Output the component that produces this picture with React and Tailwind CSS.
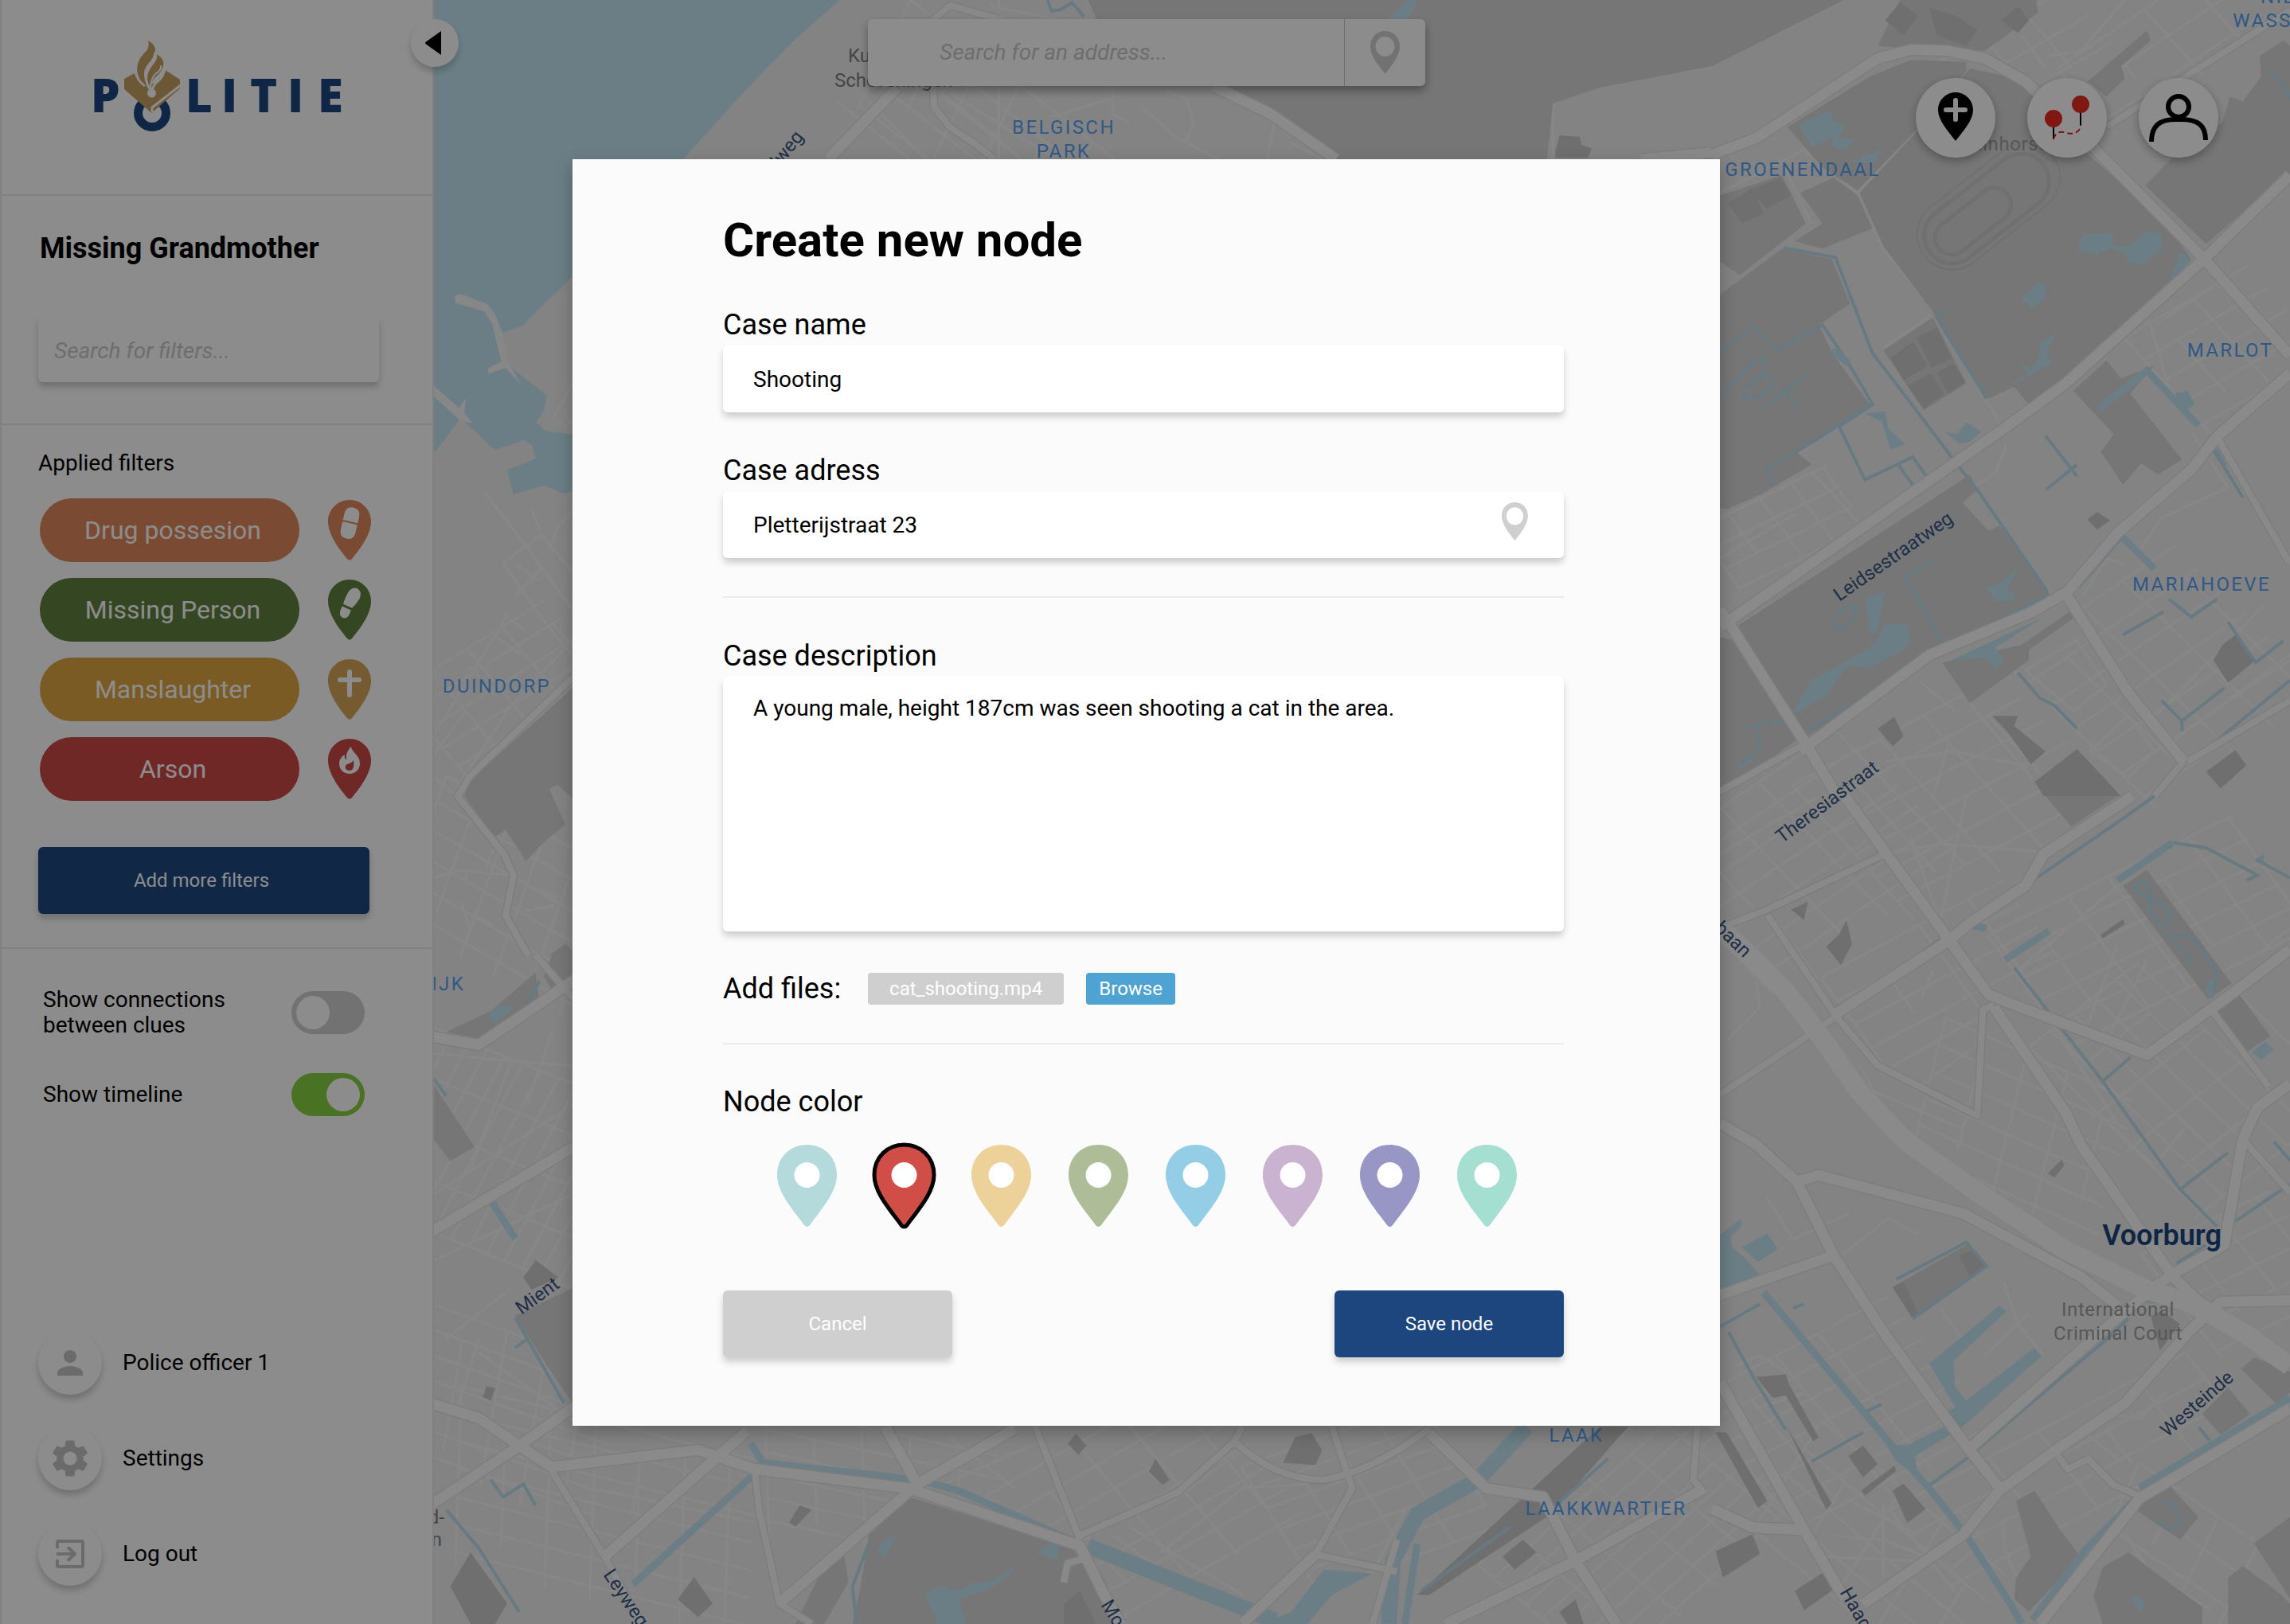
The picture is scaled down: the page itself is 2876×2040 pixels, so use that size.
import { useState } from 'react'
import { MdPerson, MdSettings } from 'react-icons/md'

const FILTERS = [
  { label: 'Drug possesion', pill: 'bg-[#da8659]', pin: '#da8659', icon: 'pill' },
  { label: 'Missing Person', pill: 'bg-[#5f7f3d]', pin: '#5f7f3d', icon: 'step' },
  { label: 'Manslaughter', pill: 'bg-[#daa340]', pin: '#d1a354', icon: 'cross' },
  { label: 'Arson', pill: 'bg-[#c84844]', pin: '#c84844', icon: 'fire' },
]

const NODE_COLORS = [
  { name: 'Aqua', fill: '#b5dadb' },
  { name: 'Red', fill: '#d04e45' },
  { name: 'Sand', fill: '#ecd299' },
  { name: 'Olive', fill: '#aebd98' },
  { name: 'Sky', fill: '#93cee6' },
  { name: 'Lilac', fill: '#c9b3d0' },
  { name: 'Violet', fill: '#9896c4' },
  { name: 'Mint', fill: '#a5dfd2' },
]

export default function App() {
  return (
    <div className="relative flex min-h-screen overflow-hidden bg-[#fafafa] font-['Roboto',sans-serif] text-black">
      <Sidebar />
      <main className="relative flex-1 overflow-hidden">
        <CityMap />
        <div className="relative flex items-start justify-between pr-[90px] pl-[545px]">
          <AddressSearch />
          <MapActions />
        </div>
      </main>
      <div className="absolute inset-0 z-20 bg-black/44 pt-[200px]">
        <NodeDialog />
      </div>
    </div>
  )
}

/* ---------- sidebar ---------- */

function Sidebar() {
  const [connections, setConnections] = useState(false)
  const [timeline, setTimeline] = useState(true)

  return (
    <aside className="relative z-10 flex w-[545px] shrink-0 flex-col border-x-2 border-[#e4e4e4] bg-[#fafafa]">
      <div className="h-[246px] border-b-2 border-[#e4e4e4] pt-12 pl-[108px]">
        <Logo />
      </div>

      <div className="border-b-2 border-[#e4e4e4] px-[46px] pt-[46px] pb-[52px]">
        <h1 className="pl-[2px] text-[36px] leading-10 font-bold">Missing Grandmother</h1>
        <input
          type="search"
          aria-label="Search for filters"
          placeholder="Search for filters..."
          className="mt-16 block h-[84px] w-[428px] rounded-md bg-[#fafafa] px-5 pt-1 text-[28px] italic shadow-[0_6px_8px_rgba(0,0,0,0.2)] placeholder:text-[#c4c4c4]"
        />
      </div>

      <div className="border-b-2 border-[#e4e4e4] px-[46px] pt-8 pb-[42px]">
        <h2 className="text-[28px] leading-8">Applied filters</h2>
        <ul className="mt-7 flex flex-col gap-5 pl-[2px]">
          {FILTERS.map(f => (
            <li key={f.label} className="flex items-center gap-9">
              <button className={`h-20 w-[326px] rounded-full pl-2 text-[32px] text-[#fafafa] ${f.pill}`}>{f.label}</button>
              <FilterPin color={f.pin} icon={f.icon} />
            </li>
          ))}
        </ul>
        <button className="mt-[58px] h-[84px] w-[416px] rounded-md bg-[#1d467e] pr-[6px] text-[24px] text-[#fafafa] shadow-[0_6px_8px_rgba(0,0,0,0.2)]">
          Add more filters
        </button>
      </div>

      <div className="flex flex-col gap-11 pt-12 pr-[85px] pl-[52px]">
        <Switch id="connections" checked={connections} onChange={setConnections}>
          Show connections<br />between clues
        </Switch>
        <Switch id="timeline" checked={timeline} onChange={setTimeline}>Show timeline</Switch>
      </div>

      <nav className="mt-auto flex flex-col gap-10 pb-12 pl-[46px]">
        <NavItem label="Police officer 1"><MdPerson className="size-12" /></NavItem>
        <NavItem label="Settings"><MdSettings className="size-14" /></NavItem>
        <NavItem label="Log out">
          <svg viewBox="0 0 36 36" className="size-9" fill="none" stroke="currentColor" strokeWidth="4">
            <path d="M2 11V4Q2 2 4 2H32Q34 2 34 4V32Q34 34 32 34H4Q2 34 2 32V25" />
            <path d="M1 18H24M15 9.500L24 18L15 26.500" />
          </svg>
        </NavItem>
      </nav>

      <button
        aria-label="Collapse sidebar"
        className="absolute top-6 -right-[33px] flex size-[60px] items-center justify-center rounded-full bg-[#fafafa] pr-1 shadow-[0_6px_8px_rgba(0,0,0,0.2)]"
      >
        <svg viewBox="0 0 20 30" className="h-[30px] w-5">
          <path d="M20 0V30L1 16.500Q-1 15 1 13.500Z" />
        </svg>
      </button>
    </aside>
  )
}

function Logo() {
  return (
    <svg viewBox="110 48 340 120" className="h-[120px] w-[340px]" role="img" aria-label="Politie">
      <g fill="#1b457d" className="font-['Open_Sans',sans-serif] text-[58px] font-extrabold">
        <text x="114" y="141">P</text>
        <text x="233" y="141">L</text>
        <text x="278" y="141">I</text>
        <text x="314" y="141">T</text>
        <text x="361" y="141">I</text>
        <text x="399" y="141">E</text>
      </g>
      <circle cx="191" cy="142" r="17.500" fill="none" stroke="#1b457d" strokeWidth="11" />
      {/* law book */}
      <path fill="#c39d60" d="M156 99L169 92Q176 100 190 106Q204 100 207.500 88L226 100V111L190.500 142L156 112Z" />
      <path stroke="#fafafa" strokeWidth="3" fill="none" d="M191 141V135L227 107" />
      {/* flame */}
      <path stroke="#fafafa" strokeWidth="3" fill="none" d="M170 90Q172 101 182 108M207 84Q207 96 196 104Q192 108 191 114" />
      <path fill="#c39d60" d="M186 51Q196 56 195 65Q194 72 187 79Q180 87 181 95Q182 102 186 110Q173 100 172 88Q172 76 181 67Q189 60 186 51Z" />
      <path fill="#c39d60" d="M197 68Q207 74 205 83Q203 90 197 95Q190 101 189 110Q183 102 186 92Q188 86 193 80Q198 75 197 68Z" />
      <path stroke="#fafafa" strokeWidth="3" fill="none" d="M195 65Q195 72 188 81Q182 88 183 98Q184 105 188 112" />
      <path stroke="#fafafa" strokeWidth="2" fill="none" d="M202 82Q204 87 195 93Q189 99 189 112" />
      <circle cx="190.500" cy="117" r="5.500" fill="#fafafa" />
    </svg>
  )
}

function FilterPin({ color, icon }) {
  return (
    <svg viewBox="0 0 54 76" className="h-[76px] w-[54px]" aria-hidden="true">
      <path fill={color} d="M27 0C12 0 0 12 0 27C0 45 16 64 24 74Q27 77 30 74C38 64 54 45 54 27C54 12 42 0 27 0Z" />
      {icon === 'pill' && (
        <g transform="rotate(13 27 29)" fill="#fafafa">
          <path d="M18 27V19Q18 9 27.500 9T37 19V27Z" />
          <path d="M18 29H37V39Q37 49 27.500 49T18 39Z" />
        </g>
      )}
      {icon === 'step' && (
        <g transform="rotate(24 27 30)" fill="#fafafa">
          <path d="M20 34Q17 10 27 9Q36 9 36 20Q35 28 32 34Z" />
          <path d="M20 37H32Q34 50 26 50Q19 49 20 37Z" />
        </g>
      )}
      {icon === 'cross' && <path stroke="#fafafa" strokeWidth="6" strokeLinecap="round" d="M27 16V45M15 26H39" />}
      {icon === 'fire' && (
        <>
          <path fill="#fafafa" d="M29 10C30 18 40 20 40 31C40 39 34 44 27 44C20 44 14 39 14 31C14 26 17 22 21 20C20 24 22 26 23 26C22 19 25 14 29 10Z" />
          <path fill={color} d="M32 27C33 34 32 40 27 40C23 40 21 37 22 34C23 31 29 32 32 27Z" />
        </>
      )}
    </svg>
  )
}

function Switch({ id, checked, onChange, children }) {
  return (
    <div className="flex items-center justify-between">
      <label htmlFor={id} className="text-[28px] leading-8">{children}</label>
      <input
        id={id}
        type="checkbox"
        checked={checked}
        onChange={e => onChange(e.target.checked)}
        className="h-[54px] w-[92px] appearance-none rounded-full bg-[#cbcbcb] before:m-[6px] before:block before:size-[42px] before:rounded-full before:bg-[#fafafa] checked:bg-[#82cb3d] checked:before:ml-11"
      />
    </div>
  )
}

function NavItem({ label, children }) {
  return (
    <a href="#" className="flex items-center gap-[26px] text-[28px] leading-8">
      <span className="flex size-20 items-center justify-center rounded-full bg-[#fafafa] text-[#bfbfbf] shadow-[0_6px_8px_rgba(0,0,0,0.2)]">
        {children}
      </span>
      {label}
    </a>
  )
}

/* ---------- controls on top of the map ---------- */

function AddressSearch() {
  return (
    <div className="mt-6 flex h-[84px] w-[700px] rounded-md bg-[#fafafa] shadow-[0_6px_12px_rgba(0,0,0,0.35)]">
      <input
        type="search"
        aria-label="Search for an address"
        placeholder="Search for an address..."
        className="min-w-0 flex-1 pl-[90px] text-[28px] italic placeholder:text-[#c4c4c4]"
      />
      <button aria-label="Pick on map" className="flex w-[102px] items-center justify-center border-l border-[#c4c4c4] text-[#cbcbcb]">
        <OutlinePin className="h-[54px] w-[37px]" />
      </button>
    </div>
  )
}

function OutlinePin({ className }) {
  return (
    <svg viewBox="0 0 37 54" className={className} aria-hidden="true">
      <path fill="currentColor" fillRule="evenodd" d="M18.500 0C8 0 0 8 0 19C0 31 10 43 18.500 54C27 43 37 31 37 19C37 8 29 0 18.500 0ZM18.500 7A12 12.500 0 1 1 18.500 32A12 12.500 0 1 1 18.500 7Z" />
    </svg>
  )
}

function MapActions() {
  const round = 'flex size-[100px] items-center justify-center rounded-full bg-[#fafafa] shadow-[0_4px_12px_rgba(0,0,0,0.3)]'
  return (
    <div className="mt-[98px] flex gap-10">
      <button aria-label="Add node" className={round}>
        <svg viewBox="0 0 100 100" className="size-[100px]">
          <path d="M50 18C38 18 28 28 28 40C28 53 40 66 50 79C60 66 72 53 72 40C72 28 62 18 50 18Z" />
          <path stroke="#fafafa" strokeWidth="6" strokeLinecap="round" d="M50 28V52M38 40H62" />
        </svg>
      </button>
      <button aria-label="Show connections" className={round}>
        <svg viewBox="0 0 100 100" className="size-[100px]" fill="none">
          <path stroke="black" strokeWidth="2" d="M33 60V77M67 42V60" />
          <path stroke="#d5241c" strokeWidth="2" strokeDasharray="7 4" d="M33 77Q36 66 46 68Q54 71 60 69Q67 66 67 59" />
          <circle cx="33" cy="51" r="11" fill="#e8281f" />
          <circle cx="67" cy="33" r="11" fill="#e8281f" />
        </svg>
      </button>
      <button aria-label="Account" className={round}>
        <svg viewBox="0 0 100 100" className="size-[100px]" fill="none" stroke="black" strokeWidth="6">
          <circle cx="50" cy="36" r="13" />
          <path d="M16 80C16 60 26 51 50 52C75 51 84 60 84 78" />
        </svg>
      </button>
    </div>
  )
}

/* ---------- dialog ---------- */

const LABEL = 'block text-[36px] leading-10'
const FIELD = 'mt-[6px] block w-full rounded-md bg-white px-[38px] text-[28px] leading-8 shadow-[0_6px_8px_rgba(0,0,0,0.18)]'

function NodeDialog() {
  const [name, setName] = useState('Shooting')
  const [address, setAddress] = useState('Pletterijstraat 23')
  const [description, setDescription] = useState('A young male, height 187cm was seen shooting a cat in the area.')
  const [color, setColor] = useState('Red')

  return (
    <form
      role="dialog"
      aria-labelledby="dialog-title"
      onSubmit={e => e.preventDefault()}
      className="ml-[25%] w-[50.1%] bg-[#fbfbfb] pt-[72px] pr-[196px] pb-[86px] pl-[189px] shadow-[0_8px_20px_rgba(0,0,0,0.25)]"
    >
      <h2 id="dialog-title" className="text-[60px] leading-[60px] font-bold">Create new node</h2>

      <label htmlFor="case-name" className={`mt-14 ${LABEL}`}>Case name</label>
      <input id="case-name" value={name} onChange={e => setName(e.target.value)} className={`h-[84px] ${FIELD}`} />

      <label htmlFor="case-address" className={`mt-[53px] ${LABEL}`}>Case adress</label>
      <div className="relative">
        <input id="case-address" value={address} onChange={e => setAddress(e.target.value)} className={`h-[84px] ${FIELD}`} />
        <OutlinePin className="absolute top-[14px] right-11 h-12 w-[35px] text-[#cfcfcf]" />
      </div>

      <hr className="mt-12 border-t-2 border-[#ebebeb]" />

      <label htmlFor="case-description" className={`mt-[53px] ${LABEL}`}>Case description</label>
      <textarea
        id="case-description"
        value={description}
        onChange={e => setDescription(e.target.value)}
        className={`h-80 resize-none py-6 ${FIELD}`}
      />

      <div className="mt-[52px] flex items-center">
        <span className="text-[36px] leading-10">Add files:</span>
        <span className="ml-[34px] flex h-10 w-[246px] items-center justify-center rounded-sm bg-[#cfcfcf] text-[24px] text-white">
          cat_shooting.mp4
        </span>
        <button type="button" className="ml-7 h-10 w-28 rounded-sm bg-[#4ea3d5] text-[24px] text-white">Browse</button>
      </div>

      <hr className="mt-12 border-t-2 border-[#ebebeb]" />

      <fieldset>
        <legend className={`pt-[52px] ${LABEL}`}>Node color</legend>
        <div className="flex gap-[47px] pt-[34px] pl-[68px]">
          {NODE_COLORS.map(c => (
            <label key={c.name} className="cursor-pointer">
              <input
                type="radio"
                name="node-color"
                aria-label={c.name}
                checked={color === c.name}
                onChange={() => setColor(c.name)}
                className="peer sr-only"
              />
              <svg
                viewBox="0 0 75 103"
                className="h-[103px] w-[75px] overflow-visible stroke-transparent stroke-[5px] peer-checked:stroke-black"
              >
                <path fill={c.fill} d="M37.500 0C16 0 0 16 0 38C0 61 22 84 34 101Q37.500 105 41 101C53 84 75 61 75 38C75 16 59 0 37.500 0Z" />
                <circle cx="37.500" cy="38" r="16" fill="white" stroke="none" />
              </svg>
            </label>
          ))}
        </div>
      </fieldset>

      <div className="mt-20 flex justify-between">
        <button type="button" className="h-[84px] w-72 rounded-md bg-[#cfcfcf] text-[24px] text-white shadow-[0_6px_8px_rgba(0,0,0,0.18)]">
          Cancel
        </button>
        <button className="h-[84px] w-72 rounded-md bg-[#1d467e] text-[24px] text-white shadow-[0_6px_8px_rgba(0,0,0,0.18)]">
          Save node
        </button>
      </div>
    </form>
  )
}

/* ---------- map ---------- */

// street blocks: centre, size, angle, skew and spacing of the streets
const BLOCKS = [
  [640, 1130, 260, 190, 30, 10, 34, 48],
  [640, 870, 220, 150, -32, 8, 30, 52],
  [620, 1450, 240, 330, -62, 6, 24, 60],
  [640, 1780, 260, 200, 20, 10, 30, 54],
  [1240, 170, 330, 150, 38, 12, 36, 58],
  [760, 1900, 380, 220, 14, 12, 34, 58],
  [1110, 1880, 300, 160, 12, 14, 28, 62],
  [1440, 1890, 300, 220, -30, 10, 36, 66],
  [1720, 1880, 240, 180, -20, 12, 30, 60],
  [2060, 1930, 320, 220, -42, 8, 26, 58],
  [2230, 650, 180, 120, -26, 10, 30, 44],
  [2270, 1080, 300, 230, -34, 10, 34, 58],
  [2460, 1000, 300, 220, -28, 14, 38, 62],
  [2440, 1220, 260, 130, -28, 8, 36, 70],
  [2720, 850, 260, 260, -34, 12, 40, 60],
  [2700, 1170, 340, 170, -26, 10, 34, 56],
  [2720, 1370, 300, 180, 44, -8, 34, 60],
  [2540, 1420, 260, 180, 24, 10, 34, 56],
  [2800, 440, 180, 160, -30, 12, 36, 50],
  [2820, 1600, 180, 160, -26, 12, 38, 54],
  [2600, 1850, 420, 130, -28, 10, 40, 70],
  [2320, 1780, 280, 220, -28, 12, 34, 60],
  [2360, 1950, 300, 160, 40, 8, 40, 66],
  [2760, 1960, 240, 120, 34, 8, 44, 60],
  [2520, 80, 240, 90, -30, 10, 44, 60],
  [2720, 60, 240, 110, -34, 8, 44, 66],
]

function blockPath(w, h, gapX, gapY) {
  let d = ''
  for (let y = -h / 2; y <= h / 2; y += gapX) d += `M${-w / 2} ${y}H${w / 2}`
  for (let x = -w / 2, i = 0; x <= w / 2; x += gapY, i++) {
    d += i % 3 === 1 ? `M${x} ${-h / 2 + gapX}V${h / 2 - gapX}` : `M${x} ${-h / 2}V${h / 2}`
  }
  return d
}

// every sheet is drawn in its own units and placed on the map by its transform
const SHEETS = [
  {
    id: 'north',
    transform: 'translate(1040 0) scale(0.5102 0.3333)',
    parks: 'M640 0L660 70L950 320L1250 600H1770L1784 390L1900 330L2176 250L2500 0Z',
    dark: 'M1790 575L1800 510L1850 515L1855 545L1880 560L1870 595H1790Z',
    water: 'M1380 72L1425 0H1450L1430 72Z',
    canals: 'M540 0L550 40L570 38L600 10L630 62',
    wide: '',
    streets: 'M20 380L200 600M100 380L240 600M400 10L430 75M420 0L420 30L560 72M270 340L420 520M300 350L560 600M420 330V600M550 440L720 360M700 330V430L740 460M770 400L860 520L960 600M880 370L830 340M880 370L900 460L880 540M1105 420L1080 600M1140 540L1220 600M1784 600V400L1830 340L2176 250',
    medium: 'M260 340V400L300 480L360 540L410 600M240 100L300 20L420 72',
    roads: 'M0 600L170 330M950 325L1090 430L1250 600M2000 600L2176 575',
  },
  {
    id: 'north-east',
    transform: 'translate(2150 0) scale(0.463 0.6378)',
    parks: 'M0 0H165L0 125ZM400 380L560 255L700 135L800 150L900 200L1000 290L1230 440L1300 510L1180 610L960 750L860 797L820 762L750 785L595 610L465 485ZM205 250L430 150L540 118L690 122L690 140L550 260L395 375L300 330ZM22 385L190 345L255 440L75 542L22 515ZM240 380L330 350L395 385L435 450L300 490L225 475L300 440ZM22 580L190 490L325 510L375 598L290 640L330 700L430 798L230 890L270 915L130 975L40 1003L22 1000ZM65 1235L700 935L720 965L680 990L750 1045L780 1035L915 1170L620 1285L260 1450ZM22 1255L55 1260L235 1455L22 1565ZM980 770L1070 710L1110 745L1200 720L1135 775L1275 905L1210 935L1165 912L1115 955L1055 890L1090 855ZM450 90L510 0H880L885 25L740 100L520 95ZM1175 365L1250 310L1300 290L1385 240L1405 190L1440 200L1490 150L1485 110L1550 80L1568 90V340L1340 480ZM1020 160L1180 60L1190 80L1110 130L1120 155L1070 190ZM625 1305L840 1270L970 1205L985 1215L860 1280V1300L700 1385ZM465 690L600 625L690 755L575 808Z',
    dark: 'M485 705L545 672L585 720L520 750ZM555 665L610 645L650 705L595 725ZM530 760L595 735L630 775L575 805ZM610 735L655 715L688 752L640 775ZM45 400L110 370L140 420L80 440ZM100 375L185 350L215 385L150 410ZM470 40L510 5L560 30L520 70ZM590 15L660 30L720 60L690 90L610 70ZM785 40L830 12L860 40L830 65ZM1360 1300L1385 1270L1420 1250L1475 1300L1400 1345ZM450 1435L495 1412L520 1450L490 1470ZM760 1410L830 1410L820 1430L905 1480L865 1505L800 1440ZM875 1540L990 1475L1110 1568H900ZM1340 1520L1420 1477L1450 1507L1380 1553ZM1018 1023L1045 1008L1080 1025L1045 1043Z',
    water: 'M235 245L320 218L330 240L360 245L345 270L385 275L360 295L325 290L330 270L270 290ZM370 320L460 295L440 320ZM990 490L1010 460L1085 460V485L1130 485L1180 455L1220 460V490L1170 522L1130 515L1120 495L1080 490L1040 502ZM840 590L880 560L905 558V585L870 608ZM1300 512L1270 495L1240 560ZM220 1400L270 1340L370 1300L440 1270L470 1230L530 1230L540 1265L500 1290L420 1315L370 1310L310 1370L230 1403ZM415 1180L470 1165L450 1240L430 1250ZM745 785L860 735L825 708L865 728L885 710L890 675L935 657L905 695L925 715L860 740ZM630 850L665 855L690 832L730 850L700 870L670 873ZM745 1155L780 1150L830 1120L800 1160L830 1180L770 1185ZM650 1300L900 1215L770 1275L790 1300L770 1315L740 1295ZM1255 775L1290 770L1310 795L1285 810ZM70 1500L120 1495L80 1512ZM415 815L470 810L480 845L525 875L485 885L460 830ZM1350 880L1375 885L1400 920L1370 905Z',
    canals: 'M195 488L335 507L435 695L525 780L660 910L720 965L910 1165M22 690L115 645L175 690L300 640L370 715L435 795L230 890M605 620L745 785M605 620L640 612M630 1275L525 1135L600 1107M630 1275L915 1170M345 840L440 795M345 840L415 945L545 900L585 942M505 915L550 960M150 920L230 890M150 920L165 955M85 785Q100 740 160 740Q170 770 130 780ZM22 780L120 710L145 705L140 750M145 800L270 730M190 765L235 808M905 965L990 915M905 858L990 938M1240 1180L1300 1215L1370 1180M1115 1250L1225 1205M1220 1380L1275 1420L1390 1355M1275 1420V1440M1400 1225L1475 1305L1550 1262M830 1325L890 1375L930 1390L990 1435M260 1440L620 1280M1300 1500L1568 1340M85 1435L215 1415M125 1435L130 1470L80 1505M1510 140L1550 165L1568 195M1360 885L1440 980M330 1225Q350 1190 390 1195Q390 1230 340 1240Z',
    wide: 'M990 1155L1110 1055L1200 1120M1050 805L1180 730L1320 838M325 690L370 715',
    streets: 'M22 380L250 295L395 380L550 260M400 380L465 490L595 605L790 845M100 1275L330 1180L700 965L770 930L800 875M190 320L270 440M840 70L905 135M910 110L1000 100L1120 0M1335 470L1350 440L1440 370L1500 330L1568 355M465 685L595 620M22 1020L150 975L270 930L400 1030M22 1100L230 1010M1110 600L1190 640L1250 790M1200 640L1370 560L1450 610M1300 850L1400 960L1220 1020L1160 1085M1010 1170L1070 1100L1120 1110M850 1320L990 1260L1070 1350L980 1400ZM1025 1480L1130 1410L1200 1480L1130 1530ZM700 1385L870 1535M470 1500L660 1480L860 1510M640 1470L600 1568M660 1400L560 1340M1190 1420L1500 1190M1230 1470L1568 1290',
    medium: 'M1070 250L1568 20M1290 1500L1568 1380M1280 1500L1200 1568M1370 860L1568 1110M0 1568L240 1470',
    roads: 'M0 305L120 272L450 115L540 98L640 100L740 115L850 160L1000 265L1335 510L1568 700M22 1235L800 840L960 755L1335 510L1568 345M240 1480L330 1430L590 1290L870 1205L965 1165L1100 1050L1300 925L1370 860L1568 735M22 1200L250 1460L340 1568M960 1170L1130 1365L1280 1500',
  },
  {
    id: 'south-east',
    transform: 'translate(2150 1000) scale(0.463 0.6633)',
    parks: 'M1115 170L1180 140L1410 355L1345 385ZM1370 405L1430 375L1515 455L1450 485ZM905 0H1100L975 58ZM490 930L690 850L745 890L545 990ZM1435 1085L1470 1063L1568 1090V1130L1530 1150ZM1330 1170L1400 1120L1460 1170L1380 1210ZM825 1335L875 1315L940 1385L1000 1440L860 1545L820 1520L825 1480L865 1440ZM1145 1350L1240 1305L1320 1365L1270 1408ZM1035 1515L1060 1460L1130 1432L1240 1490L1330 1535V1568H1060ZM1470 1415L1568 1365V1520ZM1400 1480L1440 1458L1540 1510L1568 1530V1568H1400Z',
    dark: 'M310 285L345 262L365 235L380 280L350 320ZM215 215L260 200L250 235ZM1055 262L1115 233L1120 243L1060 270ZM910 715L950 688L955 700L930 722ZM490 1315L520 1302L580 1350L530 1377ZM225 1505L310 1467L335 1500L250 1542ZM10 1430L110 1398L130 1435L30 1480ZM370 1250L410 1230L450 1265L410 1290ZM10 1205H40L150 1335L125 1348ZM120 1100L200 1095L210 1115L290 1215L275 1222L200 1135L165 1140ZM670 870L710 858L740 890L700 910ZM490 930L520 920L560 980L545 990ZM1190 985L1220 975L1270 1000L1215 1050ZM405 1315L495 1268L500 1278L415 1325ZM200 1190L325 1340L310 1352Z',
    water: 'M22 830L80 800L80 815L50 835L55 855L90 875L140 915L22 945ZM80 855L150 828L180 858L125 882ZM590 1075L780 965L800 975L655 1070L660 1120L690 1145L875 1045L895 1060L680 1195L550 1250L560 1290L500 1260L470 1225L530 1230L640 1190V1165L660 1158ZM1465 485L1500 465L1525 480L1490 500ZM1135 1520L1160 1513L1178 1530L1160 1548ZM1335 375L1350 345L1370 350L1360 385ZM1170 960L1200 950L1225 960ZM1475 120L1498 108L1495 130Z',
    canals: 'M22 1005L130 962M820 325L1060 540L1270 745L1370 815M1060 540L1135 495M860 165L1120 40L1200 0M1270 745L1400 675M1420 805L1568 735M590 1305L690 1255L840 1165L1060 1035L1130 990M1250 88L1340 98L1480 150L1450 160M1475 120L1568 155M270 1260L410 1205M220 970L250 962M420 1165L460 1152M500 915L690 845L745 890L545 990M1230 260L1300 265L1370 335L1360 370M1150 170Q1180 150 1190 180Q1170 215 1220 245Q1250 240 1240 215Q1200 195 1150 180ZM1240 270Q1290 290 1300 320M1205 1365Q1250 1410 1270 1370Q1260 1340 1220 1335M45 1015L120 1110L200 1200M1525 655L1568 690M1260 885L1340 850M1320 1195L1350 1220',
    wide: 'M795 310L915 255M1100 160L1250 88M355 410L620 275M700 245L745 250M870 1560L1010 1430L1150 1330M1160 1310L1400 1210L1568 1140M140 940L500 1240L600 1320L690 1400L810 1530L840 1568',
    streets: 'M22 110L290 0M470 110L620 90L880 105M540 80L620 240M690 0L620 235M150 215L290 350M45 460L130 400L120 350M470 520L720 420M545 560L700 480M410 520L440 560L680 630M600 330L570 380M920 430L1100 620M1060 610L1200 700L1280 630M1100 280L1000 470M1180 310L1060 480M830 330L1050 200L1110 165M1390 350L1568 470M1480 300L1568 250M150 760L220 840L370 790M350 870L480 800L560 830M740 1060L860 980M790 920L830 1000L900 1060M1060 1165L1160 1180L1230 1130M1000 1200L1110 1260M780 830L830 860M330 1400L470 1410L580 1440M465 1340V1480M300 1440L600 1450M360 1330L560 1400M640 1470L720 1420M790 1370Q790 1440 830 1480M1120 1400L1190 1470L1350 1540M60 1080L130 1060L200 1090M120 1160L250 1130M620 970L690 1040',
    medium: 'M1350 400L1510 550M1440 650L1568 750M930 1240L965 1275L1020 1255L1090 1305L1160 1325M22 565L290 440L640 270M22 250L150 215L470 110M150 225L340 420L450 510L720 605L735 405L765 395M340 880L480 1030',
    roads: 'M22 620L120 660L230 730L330 870L470 1020L700 1240L780 1310M230 730L290 718L680 790L1000 910L1100 965M360 0L620 250L750 375L800 390L1180 490L1400 380L1568 290M765 400L960 600L1000 660L1250 910L1340 970M22 945L330 870M330 415L640 275L700 240L850 170L900 110L1140 0M700 1235L1080 1000L1200 930L1250 905L1390 850L1440 650L1480 590L1568 545M22 1110L250 1390L360 1520M0 1350L110 1385L250 1390M410 1530L680 1400L780 1315L930 1240L1120 1150L1300 1010L1380 958L1568 955M890 1568L1160 1330L1568 1160',
    motorway: 'M22 250L100 300L200 370L300 460L400 560L520 650L720 750L960 860L1180 935L1300 960L1450 1020L1568 1080',
  },
  {
    id: 'coast',
    transform: 'translate(540 200) scale(0.3333 0.6378)',
    parks: 'M130 1255L150 1225L540 1040V1260L480 1232L450 1240L510 1310L430 1345L362 1382L285 1320L245 1335ZM450 1568L510 1545L540 1560V1568Z',
    dark: '',
    water: 'M0 0H540V230L420 290L350 328L270 342L280 400L440 465L430 495L400 518L435 535L540 542V655L500 658L430 643L315 660L290 612L400 590L385 565L355 553L245 573L115 510L0 590Z',
    canals: '',
    wide: '',
    land: 'M95 268L120 266L215 285L245 305L275 345L295 400L345 445L270 402L235 325L205 300L95 283ZM218 412L280 395L290 410L220 423ZM0 440L110 490L135 470L130 500L160 520L115 515L0 460Z',
    streets: 'M205 655L380 775L540 890M385 690L420 740L540 815M460 755L480 725L540 690M275 795L420 740M275 795L430 910L540 980M330 800L410 830M320 860L420 805M465 510L540 440M465 510L512 526L540 512M20 1170L130 1090M100 1240L300 1080L540 945M245 940L340 975M280 895L360 930M150 1000L250 1060M20 1130L290 900M20 1220L105 1255M20 1415L110 1400L300 1410M135 1405V1430M210 1400Q220 1370 250 1355M120 1465L150 1520M170 1490L240 1510M370 1430L480 1455M360 1480L470 1470',
    medium: 'M540 1020L150 1215L105 1255L280 1370L315 1410L285 1490L370 1568',
    roads: '',
  },
  {
    id: 'south',
    transform: 'translate(540 1200) scale(1.0204 0.5357)',
    parks: 'M590 1270L790 1390L830 1500L850 1568H520L530 1480L540 1360ZM0 290L55 450L25 482L0 420ZM75 130L130 40L135 110L60 195L20 180ZM140 50L150 0H176V40L155 95ZM105 845L176 780V1050L150 980ZM450 1568L480 1450L510 1410L515 1470L485 1568Z',
    dark: 'M115 755L130 715L158 755L125 785ZM65 1035L70 1010L80 1015L75 1045ZM1050 1190L1065 1130L1085 1120L1098 1160L1090 1195ZM785 1145L795 1122L808 1150L798 1172ZM885 1210L893 1180L910 1230L902 1242ZM442 1330L455 1290L470 1300L450 1340ZM305 1510L325 1458L348 1520L330 1552ZM1320 1410L1345 1370L1362 1400L1335 1440ZM25 1480L50 1400L95 1520L80 1568H50ZM1215 1500L1440 1105H1475L1380 1310L1230 1500ZM780 1520L800 1490L820 1568H780ZM1390 1540L1410 1510L1420 1568H1400Z',
    water: 'M610 1500Q620 1470 650 1490L670 1470Q690 1480 720 1430Q710 1480 650 1510L660 1568H625ZM745 1400L775 1370L772 1420ZM550 1400L558 1370L575 1358L560 1410ZM1020 1568L1060 1540L1100 1440L1160 1450L1110 1500L1080 1568ZM75 150Q70 110 105 120L80 160Z',
    canals: 'M540 1380L520 1480L525 1568M135 60L110 150M75 1230L90 1270L115 1240L130 1290M20 1300L60 1390L110 1540M5 290L20 330M105 850L165 1050M1220 1490L1330 1340M120 900L105 920M1380 1300L1450 1180',
    wide: 'M395 1145L410 1190L600 1230L650 1255L800 1380M400 1215L250 1475M75 575L105 665M1200 1568L1215 1380M800 1380L830 1480',
    harbour: 'M810 1385L1040 1560M1180 1568L1185 1420L1215 1310L1290 1230L1350 1105',
    streets: 'M0 230L176 260M5 560L176 350M0 720L176 560M20 900L100 780M30 1080L60 900M60 930L176 1090M100 250L50 500M150 180L120 350M900 1400L1000 1250L1080 1240M840 1360L960 1520M860 1340L1000 1500M620 1250L740 1150M640 1130L720 1250M200 1250L400 1330M260 1160L250 1300M1000 1160L900 1300M1200 1300L1160 1450',
    medium: 'M745 1105L800 1370M800 1360L920 1260L990 1140L1000 1105M990 1140Q1040 1230 1100 1230Q1160 1210 1230 1110M1110 1105L1135 1250L1090 1405L1190 1445M780 1470L785 1425L805 1415M1160 1568L1190 1370M150 1210L215 1410L260 1568M400 1210L405 1300L430 1520L470 1568M1560 1105L1555 1230L1568 1260M130 0L176 100',
    roads: 'M0 650L176 450M0 1290L110 1150L176 1060M0 1050L60 1085L110 1150L150 1200L330 1160L400 1205L590 1250L800 1385L830 1500L850 1568M215 1410L390 1115M430 1520L600 1240L720 1110M560 1105L600 1240M1090 1405L1000 1568M1230 1120L1300 1250L1370 1270L1410 1420L1460 1568M1250 1568L1410 1420L1568 1250M0 190L60 210L176 60',
  },
]

function Sheet({ sheet }) {
  return (
    <g transform={sheet.transform}>
      <path d={sheet.streets} fill="none" stroke="#f1f1f1" strokeWidth="3" vectorEffect="non-scaling-stroke" />
      <path d={sheet.parks} fill="#d3d3d3" />
      <path d={sheet.dark} fill="#c7c7c7" />
      <path d={sheet.water} fill="#bfe1ee" />
      <path d={sheet.canals} fill="none" stroke="#b8dae8" strokeWidth="4" vectorEffect="non-scaling-stroke" />
      <path d={sheet.wide} fill="none" stroke="#bfe1ee" strokeWidth="9" vectorEffect="non-scaling-stroke" />
      <path d={sheet.harbour} fill="none" stroke="#bfe1ee" strokeWidth="20" vectorEffect="non-scaling-stroke" />
      <path d={sheet.land} fill="#f0f0f0" />
      <path d={sheet.medium} fill="none" stroke="#dedede" strokeWidth="11" vectorEffect="non-scaling-stroke" strokeLinejoin="round" />
      <path d={sheet.roads} fill="none" stroke="#dedede" strokeWidth="16" vectorEffect="non-scaling-stroke" strokeLinejoin="round" />
      <path d={sheet.medium} fill="none" stroke="#f4f4f4" strokeWidth="8" vectorEffect="non-scaling-stroke" strokeLinejoin="round" />
      <path d={sheet.roads} fill="none" stroke="#f6f6f6" strokeWidth="13" vectorEffect="non-scaling-stroke" strokeLinejoin="round" />
      <path d={sheet.motorway} fill="none" stroke="#f7f7f7" strokeWidth="24" vectorEffect="non-scaling-stroke" strokeLinejoin="round" />
    </g>
  )
}

const DISTRICTS = [
  { x: 1336, y: 168, text: 'BELGISCH' },
  { x: 1336, y: 198, text: 'PARK' },
  { x: 2264, y: 221, text: 'GROENENDAAL' },
  { x: 2801, y: 448, text: 'MARLOT' },
  { x: 2765, y: 742, text: 'MARIAHOEVE' },
  { x: 2882, y: 4, text: 'NIEUW' },
  { x: 2886, y: 34, text: 'WASSENAAR' },
  { x: 624, y: 870, text: 'DUINDORP' },
  { x: 517, y: 1244, text: 'RUSTWIJK' },
  { x: 1980, y: 1811, text: 'LAAK' },
  { x: 2017, y: 1903, text: 'LAAKKWARTIER' },
]

const ROAD_NAMES = [
  { at: 'translate(2310 756) rotate(-35)', text: 'Leidsestraatweg' },
  { at: 'translate(2238 1060) rotate(-37)', text: 'Theresiastraat' },
  { at: 'translate(2190 1204) rotate(44)', text: 'Utrechtsebaan', anchor: 'end' },
  { at: 'translate(2722 1806) rotate(-41)', text: 'Westeinde' },
  { at: 'translate(2310 2000) rotate(60)', text: 'Haagweg' },
  { at: 'translate(757 1978) rotate(56)', text: 'Leyweg' },
  { at: 'translate(1382 2016) rotate(58)', text: 'Moerweg' },
  { at: 'translate(655 1652) rotate(-36)', text: 'Mient' },
  { at: 'translate(1010 172) rotate(-52)', text: 'Strandweg', anchor: 'end' },
]

function CityMap() {
  return (
    <svg
      viewBox="545 0 2331 2040"
      preserveAspectRatio="xMidYMid slice"
      className="absolute inset-0 size-full bg-[#eaeaea]"
      aria-hidden="true"
    >
      {BLOCKS.map(([x, y, w, h, angle, skew, gapX, gapY]) => (
        <path
          key={`${x}-${y}`}
          transform={`translate(${x} ${y}) rotate(${angle}) skewX(${skew})`}
          d={blockPath(w, h, gapX, gapY)}
          fill="none"
          stroke="#f0f0f0"
          strokeWidth="3"
        />
      ))}

      <path fill="#bfe1ee" d="M545 0H1055L1000 48L930 120L858 200L720 347L545 420Z" />
      {SHEETS.map(s => <Sheet key={s.id} sheet={s} />)}

      {/* race track */}
      <g fill="none" stroke="#c8c8c8" transform="rotate(-38 2498 266)">
        <rect x="2408" y="226" width="180" height="70" rx="35" strokeWidth="5" />
        <rect x="2420" y="242" width="110" height="42" rx="21" strokeWidth="5" />
        <rect x="2400" y="216" width="204" height="88" rx="44" strokeWidth="2" />
      </g>

      <g className="text-[24px] tracking-widest" fill="#529fef" textAnchor="middle">
        {DISTRICTS.map(l => <text key={l.text} x={l.x} y={l.y}>{l.text}</text>)}
      </g>
      <g className="text-[24px]" fill="#38547f">
        {ROAD_NAMES.map(l => <text key={l.text} transform={l.at} textAnchor={l.anchor}>{l.text}</text>)}
      </g>
      <g className="text-[24px] tracking-wide" fill="#9c9c9c">
        <text x="2660" y="1653" textAnchor="middle">International</text>
        <text x="2660" y="1683" textAnchor="middle">Criminal Court</text>
        <text x="2460" y="189">Duinhorst</text>
      </g>
      <g className="text-[24px]" fill="#7c7c7c">
        <text x="1065" y="78">Kurhaus</text>
        <text x="1048" y="109">Scheveningen</text>
        <text x="558" y="1914" textAnchor="end">Zuid-</text>
        <text x="555" y="1942" textAnchor="end">Uithofslaan</text>
      </g>
      <text x="2715" y="1564" textAnchor="middle" className="text-[36px] font-semibold" fill="#1a447b">Voorburg</text>
    </svg>
  )
}
